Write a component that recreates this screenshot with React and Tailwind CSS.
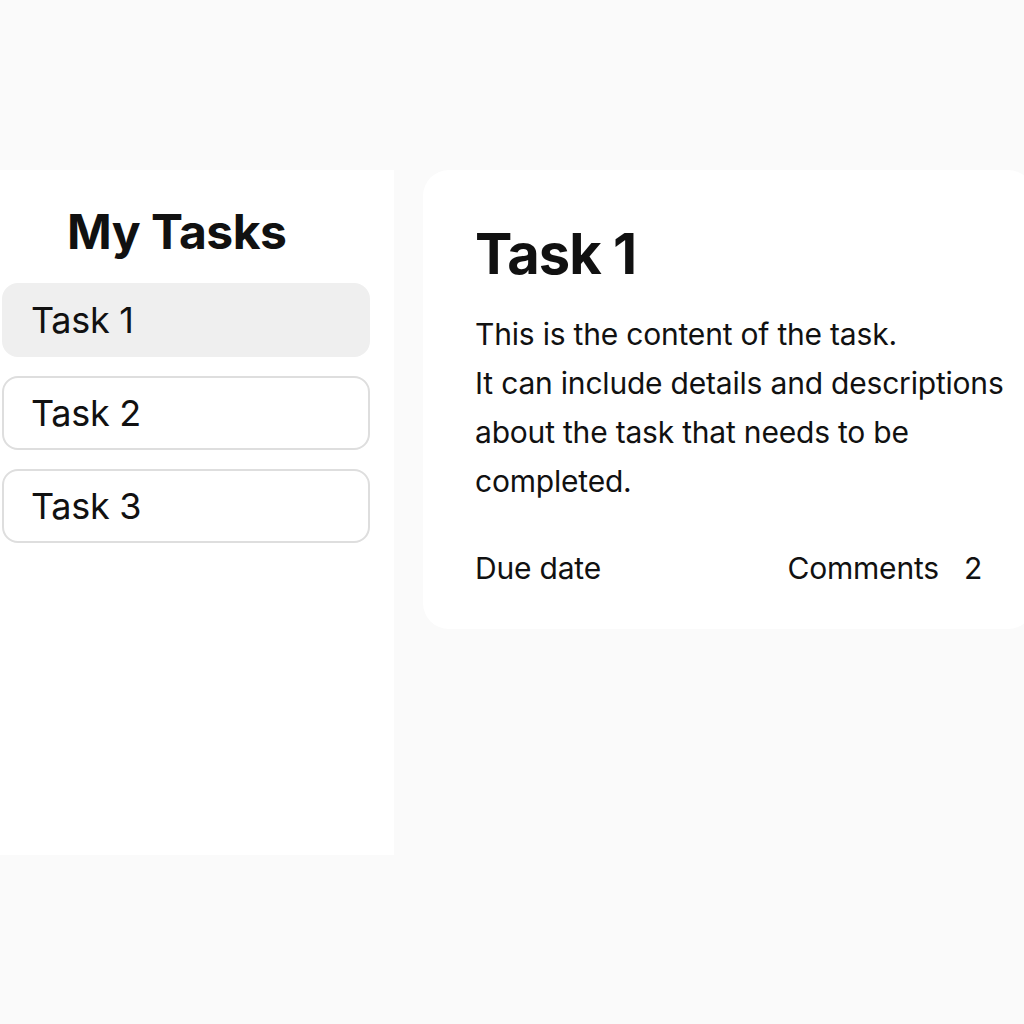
import React, { useState } from 'react';

const tasks = [
  {
    id: 1,
    title: 'Task 1',
    lines: [
      'This is the content of the task.',
      'It can include details and descriptions',
      'about the task that needs to be',
      'completed.',
    ],
    comments: 2,
  },
  { id: 2, title: 'Task 2', lines: [], comments: 0 },
  { id: 3, title: 'Task 3', lines: [], comments: 0 },
];

const App = () => {
  const [selected, setSelected] = useState(1);
  const task = tasks.find(t => t.id === selected);

  return (
    <div
      className="w-[1024px] h-[1024px] overflow-hidden bg-[#fafafa] text-[#111111]"
      style={{ fontFamily: 'Inter, "Noto Sans", sans-serif' }}
    >
      <div className="flex items-start pt-[170px] gap-[29px]">
        <aside className="w-[394px] h-[685px] shrink-0 bg-white pl-[2px] pr-[24px]">
          <h1 className="pl-[65px] pt-[34px] pb-[23px] text-[48px] leading-[56px] font-bold tracking-[-0.5px]">
            My Tasks
          </h1>
          <ul className="flex flex-col gap-[19px]">
            {tasks.map(t => (
              <li key={t.id}>
                <button
                  onClick={() => setSelected(t.id)}
                  className={
                    t.id === selected
                      ? 'w-full h-[74px] rounded-[16px] bg-[#efefef] border-2 border-[#efefef] pl-[27px] text-left text-[36px] tracking-[-0.3px]'
                      : 'w-full h-[74px] rounded-[16px] bg-white border-2 border-[#dedede] pl-[27px] text-left text-[36px] tracking-[-0.3px]'
                  }
                >
                  {t.title}
                </button>
              </li>
            ))}
          </ul>
        </aside>

        <section className="w-[611px] shrink-0 bg-white rounded-[26px] pt-[52px] pb-[41px] pl-[52px] pr-[52px]">
          <h2 className="text-[56px] leading-[64px] font-bold tracking-[-1px]">{task.title}</h2>
          <div className="mt-[24px] text-[30px] leading-[49px] tracking-[-0.2px] whitespace-nowrap">
            {task.lines.map((line, i) => (
              <p key={i}>{line}</p>
            ))}
          </div>
          <div className="mt-[42px] flex justify-between text-[30px] leading-[40px] tracking-[-0.2px]">
            <span>Due date</span>
            <span>
              Comments<span className="ml-[25px]">{task.comments}</span>
            </span>
          </div>
        </section>
      </div>
    </div>
  );
};

export default App;
